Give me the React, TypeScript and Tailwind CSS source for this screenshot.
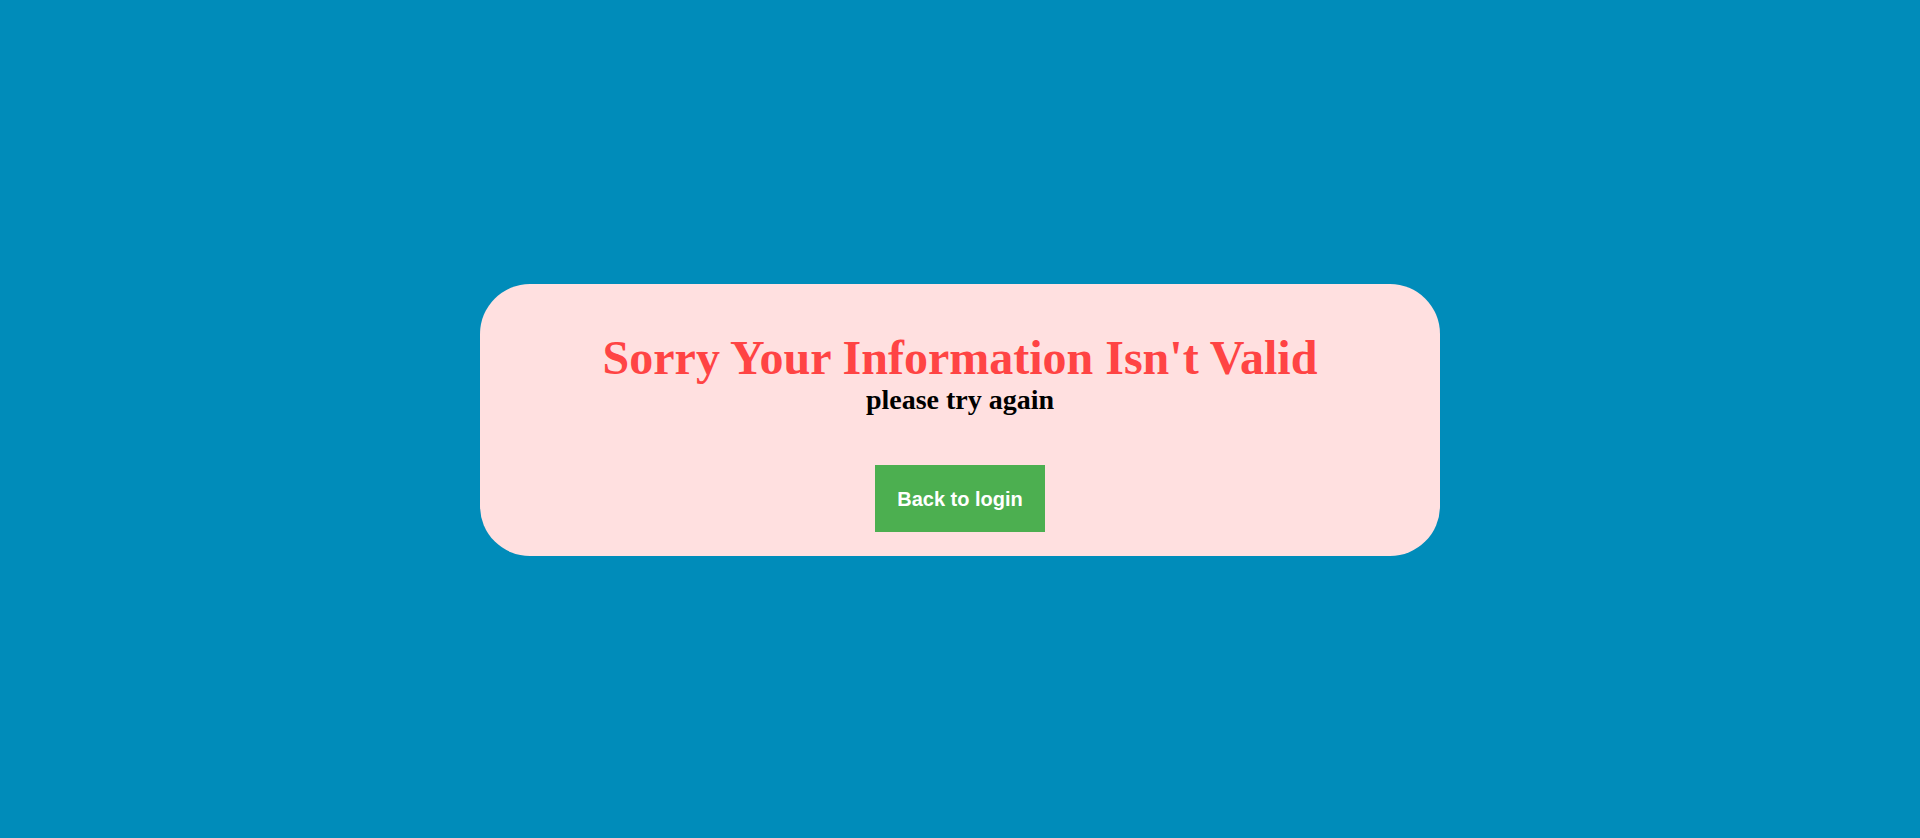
import React from "react";

export default function App() {
  return (
    <div className="w-full h-[838px] bg-[#008cba] flex items-center justify-center pt-[2px]">
      <div className="w-[960px] h-[272px] bg-[#ffe0e0] rounded-[50px] flex flex-col items-center pt-[48px]">
        <h1 className="font-['Liberation_Serif','Times_New_Roman',serif] text-[48px] leading-[52px] font-bold text-[#ff4444] text-center">
          Sorry Your Information Isn't Valid
        </h1>
        <p className="font-['Liberation_Serif','Times_New_Roman',serif] text-[28px] leading-[32px] font-bold text-black text-center">
          please try again
        </p>
        <button className="font-['Liberation_Sans',Arial,sans-serif] mt-[49px] w-[170px] h-[67px] bg-[#4caf50] text-white text-[20px] font-bold flex items-center justify-center">
          Back to login
        </button>
      </div>
    </div>
  );
}
